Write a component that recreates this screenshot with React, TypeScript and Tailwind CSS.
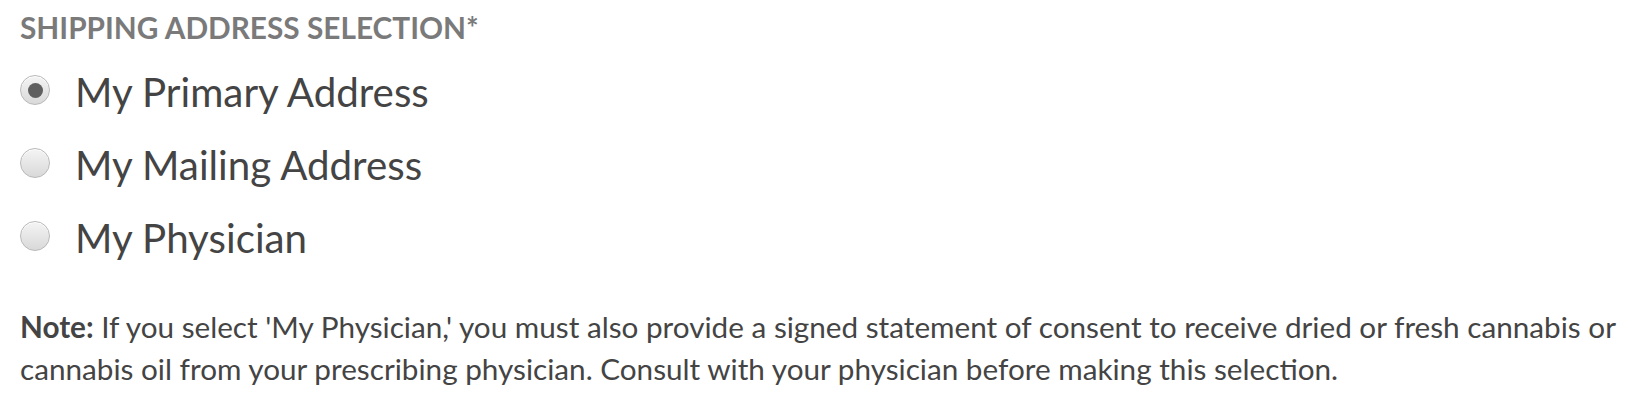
import React, { useState } from 'react';

const options = [
  { id: 'primary', label: 'My Primary Address' },
  { id: 'mailing', label: 'My Mailing Address' },
  { id: 'physician', label: 'My Physician' },
];

function Radio({ checked }: { checked: boolean }) {
  return (
    <span className="mt-[7px] flex h-[30px] w-[30px] shrink-0 items-center justify-center rounded-full border border-[#b9b9b9] bg-gradient-to-b from-[#f4f4f4] to-[#d9d9d9] shadow-[inset_0_1px_0_#fff]">
      {checked && <span className="h-[15px] w-[15px] rounded-full bg-[#5f5f5f]" />}
    </span>
  );
}

export default function App() {
  const [selected, setSelected] = useState('primary');

  return (
    <div className="min-h-[406px] bg-white px-[20px] pt-[10px] font-['Lato','Liberation_Sans',sans-serif] text-[#444]">
      <h3 className="text-[29.8px] font-bold leading-[36px] text-[#7a7a7a]">SHIPPING ADDRESS SELECTION*</h3>

      <div className="mt-[22px] flex flex-col gap-[25px]">
        {options.map((o) => (
          <label
            key={o.id}
            className="flex cursor-pointer items-start gap-[25px]"
            onClick={() => setSelected(o.id)}
          >
            <Radio checked={selected === o.id} />
            <span className="text-[40.3px] leading-[48px]">{o.label}</span>
          </label>
        ))}
      </div>

      {/* note under the options */}
      <p className="mt-[44px] text-[29.7px] leading-[42px]">
        <b className="font-bold">Note:</b> If you select 'My Physician,' you must also provide a signed statement of
        consent to receive dried or fresh cannabis or cannabis oil from your prescribing physician. Consult with your
        physician before making this selection.
      </p>
    </div>
  );
}
